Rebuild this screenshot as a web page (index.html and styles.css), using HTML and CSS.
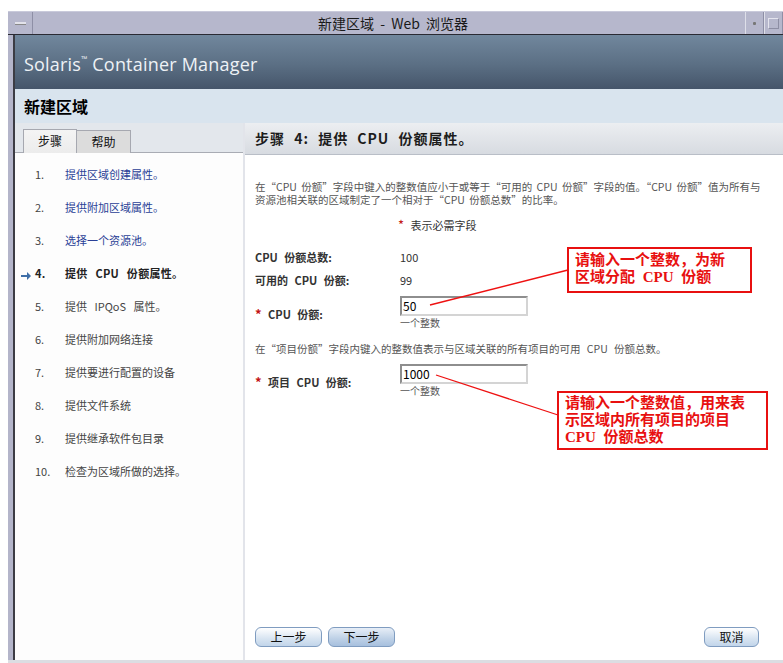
FILE: index.html
```html
<!DOCTYPE html>
<html lang="zh-CN">
<head>
<meta charset="utf-8">
<title>新建区域 - Web 浏览器</title>
<link rel="stylesheet" href="styles.css">
</head>
<body>
<div class="window">
  <div class="titlebar">
    <div class="tb-btn tb-menu"><span class="dash"></span></div>
    <div class="tb-title">新建区域 - Web 浏览器</div>
    <div class="tb-btn tb-min"><span class="dot"></span></div>
    <div class="tb-btn tb-max"><span class="sq"></span></div>
  </div>
  <div class="frame">
    <div class="frame-edge"></div>
    <div class="app">
      <div class="masthead">Solaris<sup class="tm">™</sup> Container Manager</div>
      <div class="pagetitle">新建区域</div>
      <div class="main">
        <aside class="sidebar">
          <div class="tabs">
            <div class="tab active">步骤</div>
            <div class="tab">帮助</div>
          </div>
          <ol class="steps">
            <li class="step done"><span class="num">1.</span><span class="label">提供区域创建属性。</span></li>
            <li class="step done"><span class="num">2.</span><span class="label">提供附加区域属性。</span></li>
            <li class="step done"><span class="num">3.</span><span class="label">选择一个资源池。</span></li>
            <li class="step current"><span class="arrow"><svg width="10" height="8" viewBox="0 0 10 8"><path d="M0 3h6V0l4 4-4 4V5H0z" fill="#3f6fa8"/></svg></span><span class="num">4.</span><span class="label">提供 CPU 份额属性。</span></li>
            <li class="step"><span class="num">5.</span><span class="label">提供 IPQoS 属性。</span></li>
            <li class="step"><span class="num">6.</span><span class="label">提供附加网络连接</span></li>
            <li class="step"><span class="num">7.</span><span class="label">提供要进行配置的设备</span></li>
            <li class="step"><span class="num">8.</span><span class="label">提供文件系统</span></li>
            <li class="step"><span class="num">9.</span><span class="label">提供继承软件包目录</span></li>
            <li class="step"><span class="num">10.</span><span class="label">检查为区域所做的选择。</span></li>
          </ol>
        </aside>
        <section class="content">
          <h2 class="step-head">步骤 4: 提供 CPU 份额属性。</h2>
          <div class="body">
            <p class="desc">在“CPU 份额”字段中键入的整数值应小于或等于“可用的 CPU 份额”字段的值。“CPU 份额”值为所有与资源池相关联的区域制定了一个相对于“CPU 份额总数”的比率。</p>
            <p class="required"><span class="star">*</span> 表示必需字段</p>
            <div class="row info"><span class="lbl">CPU 份额总数:</span><span class="val">100</span></div>
            <div class="row info"><span class="lbl">可用的 CPU 份额:</span><span class="val">99</span></div>
            <div class="row field">
              <span class="lbl"><span class="star">*</span> CPU 份额:</span>
              <div class="input-wrap"><div class="input">50</div><div class="hint">一个整数</div></div>
            </div>
            <p class="note">在“项目份额”字段内键入的整数值表示与区域关联的所有项目的可用 CPU 份额总数。</p>
            <div class="row field">
              <span class="lbl"><span class="star">*</span> 项目 CPU 份额:</span>
              <div class="input-wrap"><div class="input">1000</div><div class="hint">一个整数</div></div>
            </div>
            <div class="buttons">
              <button class="btn">上一步</button>
              <button class="btn primary">下一步</button>
              <span class="spacer"></span>
              <button class="btn">取消</button>
            </div>
          </div>
        </section>
      </div>
    </div>
  </div>
  <div class="bottom-edge"></div>

  <svg class="callout-lines" width="783" height="663" viewBox="0 0 783 663">
    <line x1="430" y1="305" x2="568" y2="270" stroke="#ee1111" stroke-width="1.3"/>
    <line x1="436" y1="375" x2="558" y2="415" stroke="#ee1111" stroke-width="1.3"/>
  </svg>
  <div class="callout c1">请输入一个整数，为新<br>区域分配 CPU 份额</div>
  <div class="callout c2">请输入一个整数值，用来表<br>示区域内所有项目的项目<br>CPU 份额总数</div>
</div>
</body>
</html>
```

FILE: styles.css
```css
* { box-sizing: border-box; }

html, body {
  margin: 0;
  padding: 0;
  background: #ffffff;
  width: 783px;
  height: 663px;
  overflow: hidden;
}

body {
  font-family: "Noto Sans CJK SC", "Liberation Sans", sans-serif;
  color: #333;
}

.window {
  position: relative;
  margin: 11px 0 0 8px;
  height: 652px;
  display: flex;
  flex-direction: column;
}

/* window manager title bar */
.titlebar {
  height: 24px;
  display: flex;
  align-items: stretch;
  background: #b6b7cc;
  border-top: 1px solid #c9cadb;
  border-bottom: 1px solid #2a2a33;
}
.tb-btn {
  width: 19px;
  display: flex;
  align-items: center;
  justify-content: center;
  border-left: 1px solid #dedfe9;
  border-right: 1px solid #8e8fa6;
}
.tb-menu { width: 25px; border-left: none; }
.dash { width: 11px; height: 3px; background: #e2e2ea; border-bottom: 1px solid #888; }
.dot { width: 3px; height: 3px; background: #777; border-radius: 1px; }
.sq { width: 11px; height: 11px; border: 1px solid #8d8ea4; border-top-color: #e4e4ee; border-left-color: #e4e4ee; }
.tb-title {
  flex: 1;
  text-align: center;
  font-size: 14px;
  line-height: 22px;
  color: #1a1a1a;
  padding-left: 8px;
  word-spacing: 3px;
}

.frame {
  flex: 1;
  display: flex;
  min-height: 0;
}
.frame-edge {
  width: 7px;
  background: #b4b5ca;
  border-right: 2px solid #3c3c44;
}
.app {
  flex: 1;
  display: flex;
  flex-direction: column;
  min-width: 0;
}

.masthead {
  height: 54px;
  background: linear-gradient(#71879d, #5b6f84 55%, #45556a);
  color: #eef2f6;
  font-family: "Open Sans", "Liberation Sans", sans-serif;
  font-size: 18px;
  letter-spacing: 0.2px;
  padding: 17px 0 0 9px;
}
.tm { font-size: 8px; vertical-align: 9px; }

.pagetitle {
  height: 34px;
  background: #d9e4ee;
  font-weight: bold;
  font-size: 16px;
  color: #000;
  padding: 5px 0 0 9px;
}

.main {
  flex: 1;
  display: flex;
  min-height: 0;
}

/* left step list */
.sidebar {
  width: 230px;
  background: #fdfdfd;
  border-right: 2px solid #e2e4ea;
}
.tabs {
  height: 30px;
  background: #e3e7ec;
  border-bottom: 1px solid #a9acb4;
  display: flex;
  align-items: flex-end;
  padding-left: 8px;
}
.tab {
  width: 54px;
  height: 23px;
  text-align: center;
  font-size: 12px;
  line-height: 22px;
  color: #111;
  background: #dcdcdc;
  border: 1px solid #a6a8b0;
  border-bottom: none;
  margin-bottom: -1px;
}
.tab + .tab { border-left: none; }
.tab.active { background: linear-gradient(#f4f4f4, #ececec); height: 24px; }

.steps {
  list-style: none;
  margin: 0;
  padding: 14px 0 0 0;
}
.step {
  position: relative;
  height: 33px;
  display: flex;
  align-items: flex-start;
  font-size: 11px;
  line-height: 14px;
  color: #444;
  word-spacing: 5px;
}
.num { width: 50px; padding-left: 20px; }
.step.done .label { color: #2a3f96; }
.step.current { font-weight: bold; color: #222; word-spacing: 5px; letter-spacing: 0.3px; }
.arrow { position: absolute; left: 6px; top: 2px; }

/* right panel */
.content {
  flex: 1;
  min-width: 0;
  display: flex;
  flex-direction: column;
}
.step-head {
  margin: 0;
  height: 32px;
  background: linear-gradient(#eceef1, #d7dbe1);
  border-bottom: 1px solid #b9bec7;
  font-size: 14px;
  line-height: 30px;
  padding-left: 10px;
  color: #1d1d1d;
  letter-spacing: 1px;
  word-spacing: 5px;
}
.body {
  flex: 1;
  display: flex;
  flex-direction: column;
  padding: 0 10px 0 10px;
  background: #fff;
  word-spacing: 4px;
}
.desc {
  margin: 25px 12px 0 0;
  font-size: 10.5px;
  line-height: 13px;
  color: #555;
  word-spacing: 2px;
}
.required {
  margin: 12px 0 0 143px;
  font-size: 11px;
  line-height: 14px;
  color: #333;
}
.star { color: #c31414; font-size: 13px; line-height: 10px; }

.row {
  display: flex;
  font-size: 11px;
  line-height: 14px;
}
.row.info { height: 23px; align-items: flex-start; }
.row.info:first-of-type { margin-top: 18px; }
.lbl { width: 145px; font-weight: bold; color: #333; }
.val { color: #333; }

.row.field .lbl { padding-top: 11px; }
.input {
  width: 128px;
  height: 20px;
  border: 2px solid #8e8e8e;
  border-right-color: #d4d4d4;
  border-bottom-color: #d4d4d4;
  font-size: 12px;
  line-height: 16px;
  padding-left: 1px;
  color: #000;
}
.hint { font-size: 10px; line-height: 12px; color: #555; margin-top: 1px; }
.note {
  margin: 13px 0 9px 0;
  font-size: 10.5px;
  line-height: 13px;
  color: #555;
}

.buttons {
  margin-top: auto;
  display: flex;
  gap: 6px;
  padding-bottom: 13px;
  word-spacing: 0;
}
.spacer { flex: 1; }
.btn {
  height: 20px;
  width: 67px;
  border: 1px solid #7f9cc0;
  border-radius: 6px;
  background: linear-gradient(#ffffff, #d7e4f1 60%, #c2d5ea);
  font-family: "Noto Sans CJK SC", sans-serif;
  font-size: 12px;
  line-height: 16px;
  color: #111;
  padding: 0;
}
.btn.primary { background: linear-gradient(#e7eef7, #bdd0e6 60%, #a7c0de); }
.btn:last-child { width: 55px; margin-right: 14px; }

.bottom-edge {
  height: 3px;
  background: #dcdde2;
}

/* red annotations over the form */
.callout-lines {
  position: absolute;
  left: -8px;
  top: -11px;
  pointer-events: none;
}
.callout {
  position: absolute;
  border: 2px solid #e81010;
  background: #fff;
  color: #e81010;
  font-family: "Liberation Serif", "Noto Sans CJK SC", serif;
  font-weight: bold;
  font-size: 15px;
  line-height: 17px;
  padding: 3px 6px;
  word-spacing: 4px;
}
.c1 { left: 559px; top: 236px; width: 185px; height: 46px; }
.c2 { left: 549px; top: 380px; width: 211px; height: 59px; padding-top: 2px; }
```
